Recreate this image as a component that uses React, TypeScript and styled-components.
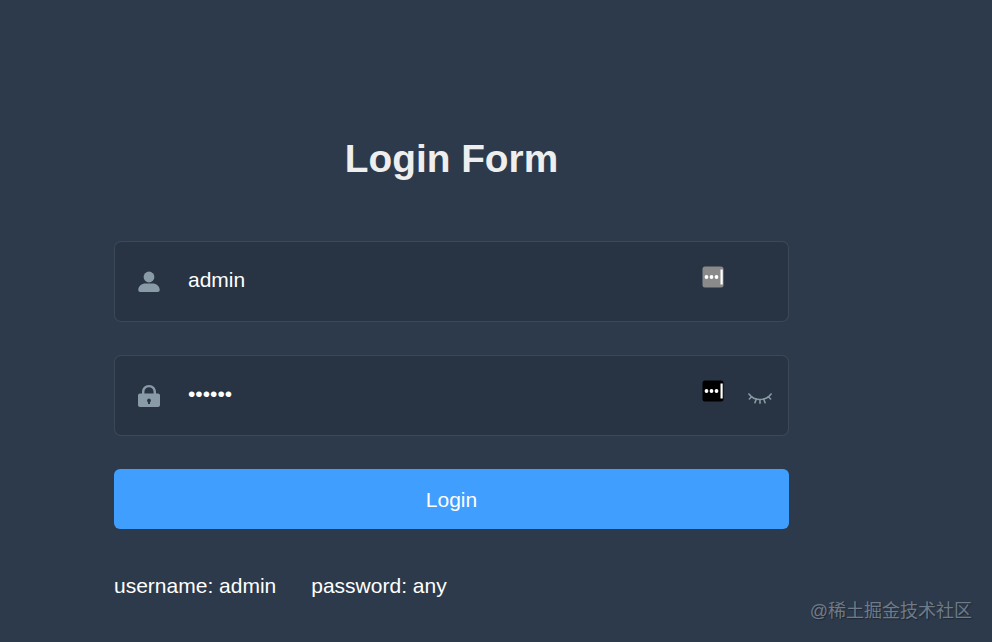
import React from "react";
import styled, { createGlobalStyle } from "styled-components";

const Global = createGlobalStyle`
  html, body { margin: 0; padding: 0; height: 100%; background: #2d3a4b; overflow: hidden; }
  #root { height: 100%; }
  * { box-sizing: border-box; }
`;

const Page = styled.div`
  position: relative;
  width: 992px;
  height: 642px;
  background: #2d3a4b;
  padding: 136px 0 0 114px;
  font-family: "Liberation Sans", Arial, sans-serif;
  color: #fff;
`;

const Form = styled.form`
  width: 675px;
  display: flex;
  flex-direction: column;
`;

const Title = styled.h3`
  margin: 0 0 60px;
  font-size: 38.8px;
  line-height: 45px;
  font-weight: 700;
  text-align: center;
  color: #eee;
`;

const Field = styled.div`
  display: flex;
  align-items: center;
  height: 81px;
  margin-bottom: 33px;
  padding: 0 16px 0 23px;
  background: #283443;
  border: 1px solid rgba(255, 255, 255, 0.1);
  border-radius: 7px;
`;

const FieldIcon = styled.svg`
  flex: none;
  width: 22px;
  height: 22px;
  fill: #8a9ba8;
`;

const Input = styled.input`
  flex: 1;
  min-width: 0;
  height: 100%;
  margin: -4px 0 0 28px;
  padding: 0;
  border: 0;
  outline: 0;
  background: transparent;
  color: #fff;
  font-family: inherit;
  font-size: 21px;
`;

const KeyBadge = styled.svg<{ $dark?: boolean; $gap: number }>`
  flex: none;
  width: 22px;
  height: 22px;
  margin-top: -10px;
  margin-right: ${(p) => p.$gap}px;
  rect { fill: ${(p) => (p.$dark ? "#000" : "#8a8a8a")}; }
`;

const Eye = styled.svg`
  flex: none;
  width: 24px;
  height: 15px;
  margin-top: 8px;
  stroke: #889aa4;
  stroke-width: 1.7;
  fill: none;
  stroke-linecap: round;
`;

const Submit = styled.button`
  height: 60px;
  padding: 2px 0 0;
  border: 0;
  border-radius: 6px;
  background: #409eff;
  color: #fff;
  font-family: inherit;
  font-size: 21px;
`;

const Tips = styled.div`
  display: flex;
  gap: 35px;
  margin-top: 45px;
  font-size: 21px;
  line-height: 24px;
`;

const Watermark = styled.div`
  position: absolute;
  right: 20px;
  top: 599px;
  font-family: "Liberation Sans", "Noto Sans CJK SC", sans-serif;
  font-size: 18px;
  line-height: 24px;
  color: #6f7b88;
  text-shadow: 1px 1px 1px rgba(20, 28, 38, 0.6);
  white-space: nowrap;
`;

const Key = ({ dark, gap }: { dark?: boolean; gap: number }) => (
  <KeyBadge $dark={dark} $gap={gap} viewBox="0 0 22 22">
    <rect x="0.5" y="0.5" width="21" height="21" rx="2.5" />
    <g fill="#fff">
      <circle cx="4.5" cy="11" r="1.9" />
      <circle cx="9.5" cy="11" r="1.9" />
      <circle cx="14.5" cy="11" r="1.9" />
      <path d="M18.500 3.500h2.200v15h-2.200z" />
    </g>
  </KeyBadge>
);

export default function App() {
  return (
    <Page>
      <Global />
      <Form onSubmit={(e) => e.preventDefault()}>
        <Title>Login Form</Title>
        <Field>
          <FieldIcon viewBox="0 0 22 22">
            <circle cx="11" cy="6" r="5.4" />
            <path d="M0.3 19c0-4.200 3.600-6.600 7-6.600h7.400c3.400 0 7 2.400 7 6.600 0 1.200-.8 2-2 2H2.300c-1.200 0-2-.8-2-2z" />
          </FieldIcon>
          <Input type="text" defaultValue="admin" readOnly />
          <Key gap={48} />
        </Field>
        <Field>
          <FieldIcon viewBox="0 0 22 22">
            <path d="M11 0C6.800 0 4 3 4 7v2h2.400V7c0-2.800 2-4.700 4.600-4.700S15.600 4.200 15.600 7v2H18V7c0-4-2.800-7-7-7z" />
            <path fillRule="evenodd" d="M2 8.500h18c1.100 0 2 .9 2 2V20c0 1.100-.9 2-2 2H2c-1.100 0-2-.9-2-2v-9.500c0-1.100.9-2 2-2zm9 5a2 2 0 0 0-1 3.700V19h2v-1.800a2 2 0 0 0-1-3.700z" />
          </FieldIcon>
          <Input type="password" defaultValue="111111" readOnly />
          <Key dark gap={24} />
          <Eye viewBox="0 0 26 16">
            <path d="M1 2c3 4 7 6 12 6s9-2 12-6" />
            <path d="M4 5L1.500 7.500M9 7.500L7.500 11.500M17 7.500L18.500 11.500M22 5L24.500 7.500M13 8.500V12" />
          </Eye>
        </Field>
        <Submit type="submit">Login</Submit>
        <Tips>
          <span>username: admin</span>
          <span>password: any</span>
        </Tips>
      </Form>
      <Watermark>@稀土掘金技术社区</Watermark>
    </Page>
  );
}
